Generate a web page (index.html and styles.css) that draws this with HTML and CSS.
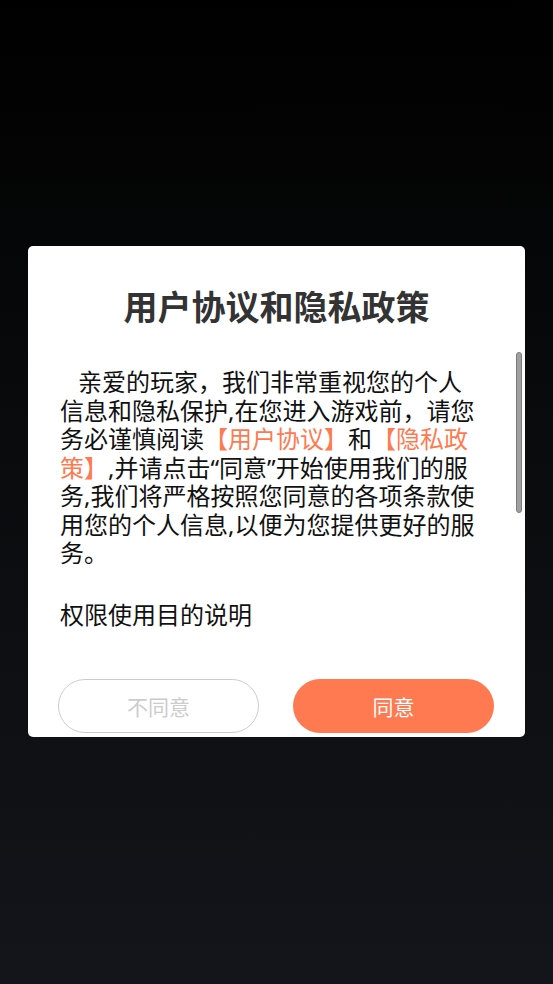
FILE: index.html
```html
<!DOCTYPE html>
<html lang="zh-CN">
<head>
<meta charset="utf-8">
<title>用户协议和隐私政策</title>
<link rel="stylesheet" href="styles.css">
</head>
<body>
<div class="screen">
  <div class="dialog">
    <h1 class="title">用户协议和隐私政策</h1>
    <div class="content">
      <p class="para first">亲爱的玩家，我们非常重视您的个人信息和隐私保护,在您进入游戏前，请您务必谨慎阅读<span class="link">【用户协议】</span>和<span class="link">【隐私政策】</span>,并请点击“同意”开始使用我们的服务,我们将严格按照您同意的各项条款使用您的个人信息,以便为您提供更好的服务。</p>
      <p class="para second">权限使用目的说明</p>
      <div class="scrollbar"></div>
    </div>
    <div class="actions">
      <button class="btn btn-decline">不同意</button>
      <button class="btn btn-agree">同意</button>
    </div>
  </div>
</div>
</body>
</html>
```

FILE: styles.css
```css
* { box-sizing: border-box; }
html, body {
  margin: 0;
  padding: 0;
  width: 553px;
  height: 984px;
}
body {
  background: linear-gradient(to bottom, #000000 0%, #0a0b0d 45%, #13151a 100%);
  font-family: "Noto Sans", "Noto Sans CJK SC", sans-serif;
}
.screen {
  width: 553px;
  height: 984px;
  display: flex;
  align-items: center;
  justify-content: center;
}
.dialog {
  width: 497px;
  height: 491px;
  margin-top: -1px;
  background: #ffffff;
  border-radius: 5px;
  display: flex;
  flex-direction: column;
  overflow: hidden;
}
.title {
  margin: 37px 0 0;
  height: 48px;
  line-height: 48px;
  font-size: 34px;
  font-weight: bold;
  color: #333333;
  text-align: center;
}
.content {
  position: relative;
  flex: 1;
  margin-top: 21px;
  padding: 16px 0 0 32px;
  overflow: hidden;
}
.para {
  margin: 0;
  width: 424px;
  font-size: 24px;
  line-height: 28.5px;
  color: #111111;
}
.first { text-indent: 18px; }
.second { margin-top: 33.5px; }
.link { color: #ff7a50; }
.scrollbar {
  position: absolute;
  right: 3px;
  top: 0;
  width: 6px;
  height: 161px;
  border-radius: 3px;
  background: #a0a0a0;
  border: 1px solid #7c7c7c;
}
.actions {
  display: flex;
  gap: 34px;
  padding: 0 31px 4px 30px;
}
.btn {
  width: 201px;
  height: 54px;
  border-radius: 27px;
  font-family: "Noto Sans", "Noto Sans CJK SC", sans-serif;
  font-size: 21px;
  padding: 0;
  cursor: pointer;
}
.btn-decline {
  background: #ffffff;
  border: 1px solid #cccccc;
  color: #cccccc;
}
.btn-agree {
  background: #ff7a50;
  border: none;
  color: #ffffff;
}
```
